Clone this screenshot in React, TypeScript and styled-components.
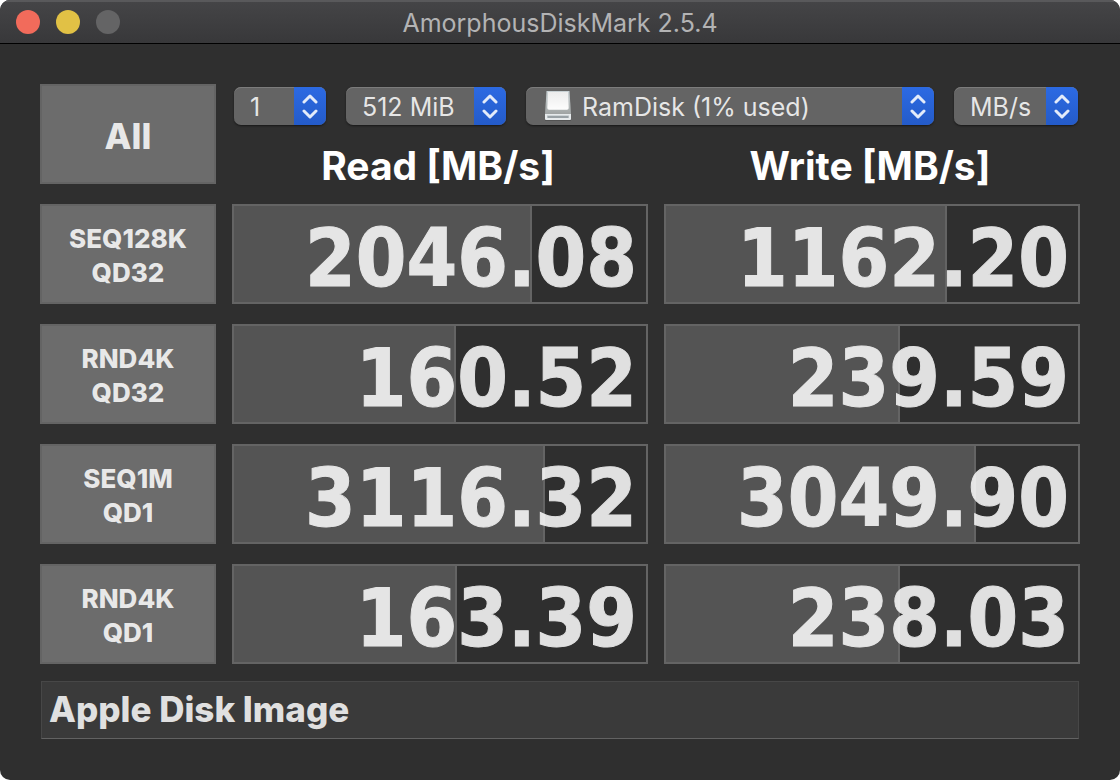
import React from "react";
import styled, { createGlobalStyle } from "styled-components";

const GlobalStyle = createGlobalStyle`
  *, *::before, *::after { box-sizing: border-box; }
  body { margin: 0; background: #fff; font-family: Inter, "Liberation Sans", sans-serif; }
  button, select, input { font: inherit; margin: 0; }
`;

const Window = styled.div`
  display: flex;
  flex-direction: column;
  min-height: 100vh;
  border-radius: 10px;
  overflow: hidden;
  background: #2f2f2f;
  color: rgba(255, 255, 255, 0.85);
`;

const TitleBar = styled.header`
  display: grid;
  grid-template-columns: 1fr auto 1fr;
  align-items: center;
  height: 44px;
  padding: 0 16px;
  background: linear-gradient(#454547, #38383a);
  border-bottom: 1px solid #000;
  box-shadow: inset 0 2px 0 #59595b;
`;

const Lights = styled.div`
  display: flex;
  gap: 16px;
`;

const Light = styled.button<{ $color: string }>`
  width: 24px;
  height: 24px;
  padding: 0;
  border: 0;
  border-radius: 50%;
  background: ${(p) => p.$color};
`;

const Title = styled.h1`
  margin: 0;
  padding-top: 2px;
  font-size: 25px;
  line-height: 32px;
  font-weight: 400;
  color: #b3b3b4;
`;

const Content = styled.main`
  display: flex;
  flex-direction: column;
  gap: 17px;
  padding: 40px;
`;

const Board = styled.div`
  display: grid;
  grid-template-columns: 176px 1fr 1fr;
  grid-auto-rows: minmax(100px, auto);
  gap: 20px 16px;
`;

const TestButton = styled.button<{ $large?: boolean }>`
  padding: 3px 0 0;
  border: 2px solid #646464;
  background: #6c6c6c;
  color: rgba(255, 255, 255, 0.85);
  font-size: ${(p) => (p.$large ? 35 : 26)}px;
  line-height: 34px;
  font-weight: 800;
  white-space: pre-line;
`;

const Setup = styled.div`
  grid-column: 2 / 4;
  display: flex;
  flex-direction: column;
  padding-top: 3px;
  gap: 23px;
`;

const Options = styled.div`
  display: flex;
  gap: 20px;
  padding: 0 2px;
`;

const Popup = styled.div<{ $width?: number }>`
  display: grid;
  ${(p) => (p.$width ? `width: ${p.$width}px;` : "flex: 1;")}
  height: 38px;
  border-radius: 7px;
  overflow: hidden;
  background: #646464;
  box-shadow: 0 1px 2px rgba(0, 0, 0, 0.5), inset 0 1px 0 #7c7c7c;

  & > * { grid-area: 1 / 1; }
`;

const PopupSelect = styled.select<{ $withIcon?: boolean }>`
  appearance: none;
  width: 100%;
  padding: 2px 32px 0 ${(p) => (p.$withIcon ? 56 : 16)}px;
  border: 0;
  background: transparent;
  color: rgba(255, 255, 255, 0.85);
  font-size: 25px;
  line-height: 36px;
`;

const Stepper = styled.span`
  justify-self: end;
  display: flex;
  align-items: center;
  justify-content: center;
  width: 32px;
  background: linear-gradient(#2c6ae3, #245bc9);
  pointer-events: none;
`;

const IconSlot = styled.span`
  justify-self: start;
  display: flex;
  padding: 2px 0 0 16px;
  pointer-events: none;
`;

const Headings = styled.div`
  display: grid;
  grid-template-columns: 1fr 1fr;
  gap: 16px;
`;

const Heading = styled.h2`
  margin: 0;
  padding-right: 4px;
  color: #fff;
  font-size: 39px;
  line-height: 36px;
  font-weight: 700;
  text-align: center;
`;

const Gauge = styled.div`
  display: grid;
  border: 2px solid #646464;

  & > * { grid-area: 1 / 1; }
`;

const GaugeFill = styled.div`
  border-right: 2px solid #646464;
  background: #545454;
`;

const GaugeValue = styled.output`
  align-self: center;
  padding: 7px 9px 0 0;
  color: #fff;
  opacity: 0.85;
  -webkit-text-stroke: 1px #fff;
  font-family: "DejaVu Sans Condensed", "DejaVu Sans", sans-serif;
  font-size: 81px;
  line-height: 88px;
  font-weight: 700;
  text-align: right;
`;

const StatusField = styled.input`
  height: 58px;
  margin: 0 1px;
  padding: 0 7px 2px;
  border: 1px solid #474747;
  border-bottom-color: #626262;
  background: #3a3a3a;
  color: rgba(255, 255, 255, 0.85);
  font-size: 35px;
  line-height: 44px;
  font-weight: 800;
`;

const Chevrons = () => (
  <Stepper>
    <svg width="16" height="26" viewBox="0 0 16 26" fill="none" stroke="#e3ebfa" strokeWidth="3" strokeLinecap="round" strokeLinejoin="round" aria-hidden="true">
      <path d="M2 9 8 3l6 6M2 18l6 6 6-6" />
    </svg>
  </Stepper>
);

const DiskIcon = () => (
  <svg width="32" height="34" viewBox="0 0 32 34" aria-hidden="true">
    <defs>
      <linearGradient id="lid" x1="0" y1="0" x2="0" y2="1">
        <stop offset="0" stopColor="#c9d2d5" />
        <stop offset="0.7" stopColor="#b0b5b5" />
        <stop offset="1" stopColor="#9fa3a3" />
      </linearGradient>
      <linearGradient id="plate" x1="0" y1="0" x2="0" y2="1">
        <stop offset="0" stopColor="#ececec" />
        <stop offset="1" stopColor="#fdfdfd" />
      </linearGradient>
    </defs>
    <path d="M3 30h26v2H3z" fill="#484848" opacity=".6" />
    <path d="M4.500 2h23L29 25H3z" fill="url(#lid)" />
    <path d="M6 3h20l.7 16q0 1.700-1.700 1.700H7q-1.700 0-1.700-1.700z" fill="url(#plate)" />
    <path d="M3 25h26v5q0 1-1 1H4q-1 0-1-1z" fill="#e6eaec" />
    <path d="M5 26.500h22v2.500H5z" fill="#b4bbbf" />
    <path d="M6 28h20" stroke="#7d868b" />
  </svg>
);

type PopupButtonProps = { label: string; value: string; width?: number; icon?: React.ReactNode };

const PopupButton = ({ label, value, width, icon }: PopupButtonProps) => (
  <Popup $width={width}>
    <PopupSelect aria-label={label} $withIcon={!!icon}>
      <option>{value}</option>
    </PopupSelect>
    {icon && <IconSlot>{icon}</IconSlot>}
    <Chevrons />
  </Popup>
);

const tests = [
  { name: "SEQ128K\nQD32", read: { value: "2046.08", level: 72.3 }, write: { value: "1162.20", level: 68.2 } },
  { name: "RND4K\nQD32", read: { value: "160.52", level: 53.9 }, write: { value: "239.59", level: 56.8 } },
  { name: "SEQ1M\nQD1", read: { value: "3116.32", level: 75.5 }, write: { value: "3049.90", level: 75.2 } },
  { name: "RND4K\nQD1", read: { value: "163.39", level: 54.1 }, write: { value: "238.03", level: 56.8 } },
];

const Result = ({ value, level }: { value: string; level: number }) => (
  <Gauge>
    <GaugeFill style={{ width: `${level}%` }} />
    <GaugeValue>{value}</GaugeValue>
  </Gauge>
);

export default function App() {
  return (
    <>
      <GlobalStyle />
      <Window>
        <TitleBar>
          <Lights>
            <Light $color="#f26b5b" aria-label="Close" />
            <Light $color="#e1c145" aria-label="Minimize" />
            <Light $color="#646465" aria-label="Zoom" disabled />
          </Lights>
          <Title>AmorphousDiskMark 2.5.4</Title>
        </TitleBar>
        <Content>
          <Board>
            <TestButton $large>All</TestButton>
            <Setup>
              <Options>
                <PopupButton label="Test count" value="1" width={92} />
                <PopupButton label="Test size" value="512 MiB" width={160} />
                <PopupButton label="Volume" value="RamDisk (1% used)" icon={<DiskIcon />} />
                <PopupButton label="Unit" value="MB/s" width={124} />
              </Options>
              <Headings>
                <Heading>Read [MB/s]</Heading>
                <Heading>Write [MB/s]</Heading>
              </Headings>
            </Setup>
            {tests.map((test) => (
              <React.Fragment key={test.name}>
                <TestButton>{test.name}</TestButton>
                <Result {...test.read} />
                <Result {...test.write} />
              </React.Fragment>
            ))}
          </Board>
          <StatusField aria-label="Device name" defaultValue="Apple Disk Image" />
        </Content>
      </Window>
    </>
  );
}
